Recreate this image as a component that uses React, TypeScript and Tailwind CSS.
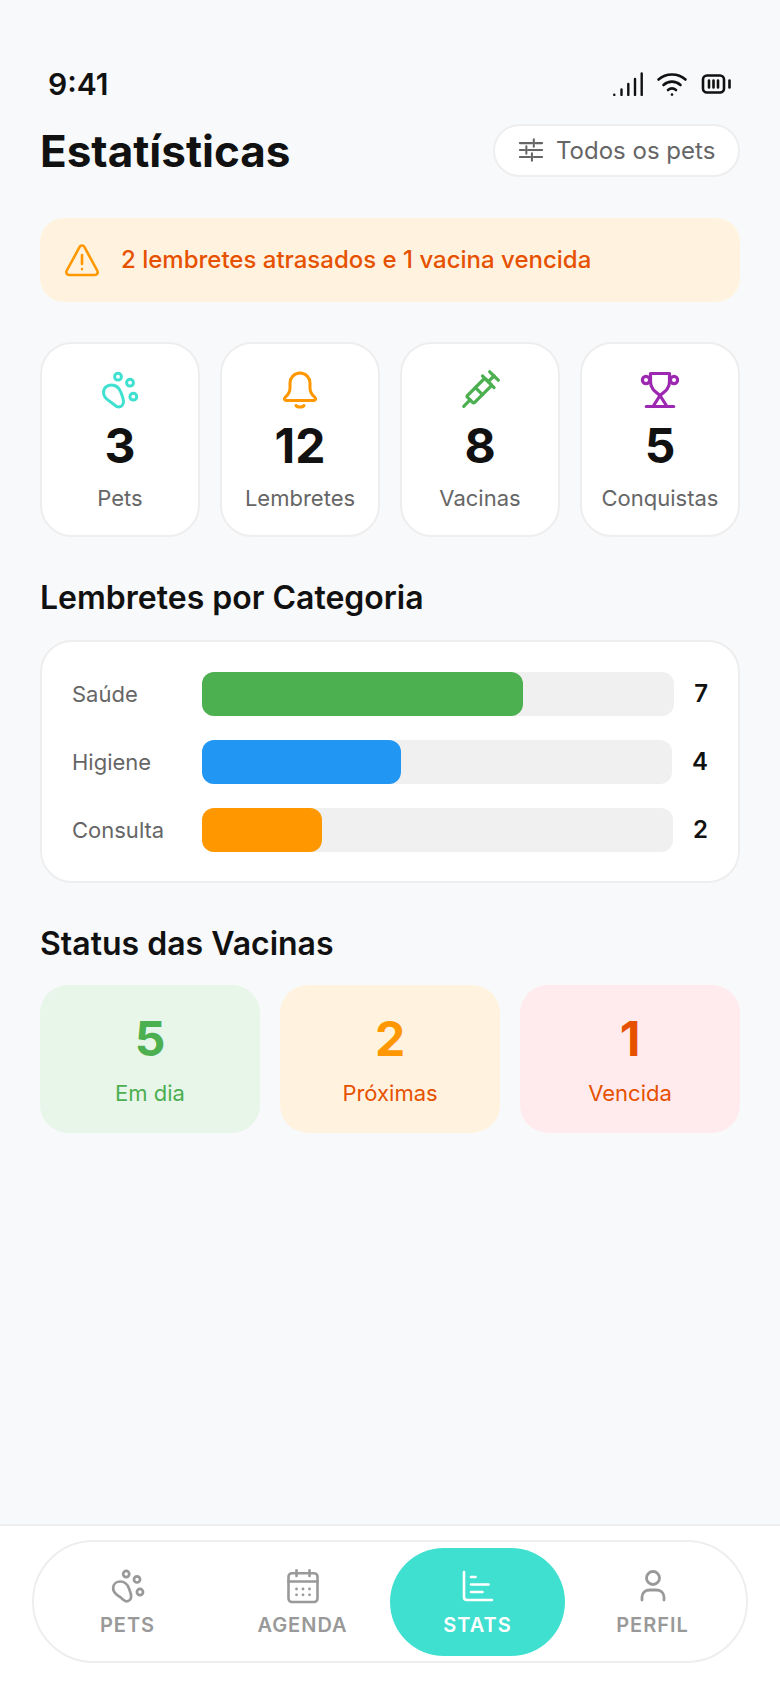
import type { ReactNode } from "react";

type IconProps = { className?: string };

function Paw({ className }: IconProps) {
	return (
		<svg viewBox="0 0 40 40" fill="none" stroke="currentColor" strokeWidth="3" strokeLinecap="round" strokeLinejoin="round" className={className}>
			<circle cx="18" cy="6.7" r="3.4" />
			<circle cx="30" cy="12.7" r="3.4" />
			<circle cx="33.3" cy="26.7" r="3.4" />
			<path d="M3.5 22.5C3.5 17.5 7.5 15 11.5 15C16 15 19.5 18.5 21 22.5C22 25.5 23.5 28.5 23.5 31.5C23.5 34.8 21.2 37 18.5 37C15.5 37 13.5 33.8 11 32.2C8 30.2 3.5 28 3.5 22.5Z" />
		</svg>
	);
}

function Bell({ className }: IconProps) {
	return (
		<svg viewBox="0 0 40 40" fill="none" stroke="currentColor" strokeWidth="3" strokeLinecap="round" strokeLinejoin="round" className={className}>
			<path d="M20 3C14 3 10 8 10 13V18C10 22 8 25 5 27.5C3.5 29 4.5 30.5 6.5 30.5H33.5C35.5 30.5 36.5 29 35 27.5C32 25 30 22 30 18V13C30 8 26 3 20 3Z" />
			<path d="M16 35.5C17 37.5 23 37.5 24 35.5" />
		</svg>
	);
}

function Syringe({ className }: IconProps) {
	return (
		<svg viewBox="0 0 40 40" fill="none" stroke="currentColor" strokeWidth="3.2" strokeLinecap="round" strokeLinejoin="round" className={className}>
			<g transform="rotate(-45 20 20)">
				<path d="M-3 20H6" />
				<rect x="6" y="15" width="25.7" height="10" rx="1.5" />
				<path d="M18.5 15V25" />
				<path d="M31.7 20H39.8" />
				<path d="M31.7 11.8V28.2" />
				<path d="M39.8 14V26" />
			</g>
		</svg>
	);
}

function Trophy({ className }: IconProps) {
	return (
		<svg viewBox="0 0 40 40" fill="none" stroke="currentColor" strokeWidth="3.2" strokeLinecap="round" strokeLinejoin="round" className={className}>
			<path d="M10.5 3.5H29.5V12C29.5 18 26 21 20 25.5C14 21 10.5 18 10.5 12V3.5Z" />
			<circle cx="6" cy="10" r="3.6" />
			<circle cx="34" cy="10" r="3.6" />
			<path d="M20 25.5L13 36.5" />
			<path d="M20 25.5L27 36.5" />
			<path d="M6.3 36.5H33.7" />
		</svg>
	);
}

function Calendar({ className }: IconProps) {
	return (
		<svg viewBox="0 0 36 36" fill="none" stroke="currentColor" strokeWidth="2.6" strokeLinecap="round" strokeLinejoin="round" className={className}>
			<rect x="3.5" y="5.2" width="29" height="28.8" rx="3.5" />
			<path d="M11.5 2.2V8M24.5 2.2V8" />
			<path d="M3.5 13.5H32.5" />
			<g fill="currentColor" stroke="none">
				<circle cx="11.5" cy="21" r="1.4" />
				<circle cx="18" cy="21" r="1.4" />
				<circle cx="24.5" cy="21" r="1.4" />
				<circle cx="11.5" cy="26.8" r="1.4" />
				<circle cx="18" cy="26.8" r="1.4" />
				<circle cx="24.5" cy="26.8" r="1.4" />
			</g>
		</svg>
	);
}

function Chart({ className }: IconProps) {
	return (
		<svg viewBox="0 0 36 36" fill="none" stroke="currentColor" strokeWidth="2.6" strokeLinecap="round" strokeLinejoin="round" className={className}>
			<path d="M4 4V29C4 31 5 32 7 32H32" />
			<path d="M11 9H15.5" />
			<path d="M11 16.5H28.5" />
			<path d="M11 24H22.5" />
		</svg>
	);
}

function Person({ className }: IconProps) {
	return (
		<svg viewBox="0 0 36 36" fill="none" stroke="currentColor" strokeWidth="2.8" strokeLinecap="round" strokeLinejoin="round" className={className}>
			<circle cx="18" cy="10" r="6.5" />
			<path d="M7 32V29C7 24.5 10.5 22 15 22H21C25.5 22 29 24.5 29 29V32" />
		</svg>
	);
}

function StatusIcons() {
	return (
		<div className="flex items-center gap-3 text-[#111111]">
			<svg viewBox="0 0 32 24" fill="none" stroke="currentColor" strokeWidth="2.4" strokeLinecap="round" className="h-6 w-8">
				<path d="M2.3 22.8V23M9.5 17.5V23M16.3 12V23M23 7V23M29.7 1.5V23" />
			</svg>
			<svg viewBox="0 0 32 24" fill="none" stroke="currentColor" strokeWidth="2.6" strokeLinecap="round" className="h-6 w-8">
				<path d="M2.5 7.5C10 0.8 22 0.8 29.5 7.5" />
				<path d="M7.5 13C12.5 8.5 19.5 8.5 24.5 13" />
				<path d="M12 18C14.5 16 17.5 16 20 18" />
				<path d="M16 22.5V22.6" />
			</svg>
			<svg viewBox="0 0 32 24" fill="none" stroke="currentColor" strokeWidth="2.6" strokeLinecap="round" className="h-6 w-8">
				<rect x="3" y="3.5" width="21" height="17" rx="4" />
				<path d="M9 8.5V15.5M13.5 8.5V15.5M18 8.5V15.5" />
				<path d="M29.5 8.5V15.5" />
			</svg>
		</div>
	);
}

function StatCard({ icon, value, label }: { icon: ReactNode; value: string; label: string }) {
	return (
		<div className="flex h-[195px] flex-col items-center rounded-[32px] border-2 border-[#eeeeee] bg-white pt-[26px]">
			{icon}
			<div className="mt-[8px] text-[48px] leading-[56px] font-bold text-[#111111]">{value}</div>
			<div className="mt-[10px] text-[22px] leading-[28px] text-[#666666]">{label}</div>
		</div>
	);
}

function BarRow({ label, value, fill, color }: { label: string; value: string; fill: string; color: string }) {
	return (
		<div className="flex items-center gap-5">
			<div className="w-[110px] shrink-0 text-[22px] leading-[28px] text-[#666666]">{label}</div>
			<div className="h-[44px] flex-1 rounded-[12px] bg-[#f0f0f0]">
				<div className={`h-full rounded-[12px] ${color}`} style={{ width: fill }} />
			</div>
			<div className="text-[24px] leading-[30px] font-semibold text-[#111111]">{value}</div>
		</div>
	);
}

function VaccineCard({ value, label, bg, numColor, labelColor }: { value: string; label: string; bg: string; numColor: string; labelColor: string }) {
	return (
		<div className={`flex h-[148px] flex-col items-center rounded-[28px] pt-[26px] ${bg}`}>
			<div className={`text-[48px] leading-[56px] font-bold ${numColor}`}>{value}</div>
			<div className={`mt-[12px] text-[22px] leading-[28px] font-normal ${labelColor}`}>{label}</div>
		</div>
	);
}

function NavItem({ icon, label, active }: { icon: ReactNode; label: string; active?: boolean }) {
	return (
		<div className={`flex h-[108px] w-[175px] flex-col items-center rounded-[54px] pt-[20px] ${active ? "bg-[#40e0d0] text-white" : "text-[#999999]"}`}>
			{icon}
			<div className="mt-[8px] text-[20px] leading-[26px] font-semibold tracking-[1px]">{label}</div>
		</div>
	);
}

export default function App() {
	return (
		<div className="flex h-[1688px] w-[780px] flex-col overflow-hidden bg-[#f8f9fa] font-['Inter',sans-serif]">
			<div className="mt-[60px] flex h-[48px] items-center justify-between pr-[48px] pl-[48px]">
				<div className="text-[30px] leading-[36px] font-semibold text-[#111111]">9:41</div>
				<StatusIcons />
			</div>

			<main className="flex-1 px-10">
				<div className="mt-[16px] flex h-[53px] items-center justify-between">
					<h1 className="text-[44px] leading-[52px] font-bold text-[#111111]">Estatísticas</h1>
					<div className="flex h-[53px] w-[247px] items-center gap-[12px] rounded-full border-2 border-[#eeeeee] bg-white pl-[23px] text-[24px] text-[#666666]">
						<svg viewBox="0 0 28 28" fill="none" stroke="currentColor" strokeWidth="2.2" strokeLinecap="round" className="h-[26px] w-[26px] shrink-0">
							<path d="M2 5.5H15M19 5.5H26M17 1.5V9.5" />
							<path d="M2 13H7M11 13H26M9 9V17" />
							<path d="M2 20.5H13M17 20.5H26M15 16.5V24.5" />
						</svg>
						<span>Todos os pets</span>
					</div>
				</div>

				<div className="mt-[41px] flex h-[84px] items-center gap-[21px] rounded-[24px] bg-[#fff3e0] pl-[24px] text-[24px] font-medium text-[#e65100]">
					<svg viewBox="0 0 36 36" fill="none" stroke="#ff9800" strokeWidth="2.6" strokeLinecap="round" strokeLinejoin="round" className="h-9 w-9 shrink-0">
						<path d="M18 3.5C16.8 3.5 16 4.2 15.5 5.2L2.8 28.5C1.6 30.8 2.8 33 5.3 33H30.7C33.2 33 34.4 30.8 33.2 28.5L20.5 5.2C20 4.2 19.2 3.5 18 3.5Z" />
						<path d="M18 13V22" />
						<path d="M18 27V27.1" />
					</svg>
					<span>2 lembretes atrasados e 1 vacina vencida</span>
				</div>

				<div className="mt-[40px] grid grid-cols-4 gap-5">
					<StatCard icon={<Paw className="h-10 w-10 text-[#40e0d0]" />} value="3" label="Pets" />
					<StatCard icon={<Bell className="h-10 w-10 text-[#ff9800]" />} value="12" label="Lembretes" />
					<StatCard icon={<Syringe className="h-10 w-10 text-[#4caf50]" />} value="8" label="Vacinas" />
					<StatCard icon={<Trophy className="h-10 w-10 text-[#9c27b0]" />} value="5" label="Conquistas" />
				</div>

				<h2 className="mt-[43px] text-[32px] leading-[36px] font-semibold text-[#111111]">Lembretes por Categoria</h2>
				<div className="mt-[24px] flex h-[243px] flex-col justify-center gap-6 rounded-[32px] border-2 border-[#eeeeee] bg-white px-[30px]">
					<BarRow label="Saúde" value="7" fill="68%" color="bg-[#4caf50]" />
					<BarRow label="Higiene" value="4" fill="42.4%" color="bg-[#2196f3]" />
					<BarRow label="Consulta" value="2" fill="25.5%" color="bg-[#ff9800]" />
				</div>

				<h2 className="mt-[43px] text-[32px] leading-[36px] font-semibold text-[#111111]">Status das Vacinas</h2>
				<div className="mt-[23px] grid grid-cols-3 gap-5">
					<VaccineCard value="5" label="Em dia" bg="bg-[#e8f5e9]" numColor="text-[#4caf50]" labelColor="text-[#4caf50]" />
					<VaccineCard value="2" label="Próximas" bg="bg-[#fff3e0]" numColor="text-[#ff9800]" labelColor="text-[#e65100]" />
					<VaccineCard value="1" label="Vencida" bg="bg-[#ffebee]" numColor="text-[#e65100]" labelColor="text-[#e65100]" />
				</div>
			</main>

			<nav className="h-[164px] shrink-0 border-t-2 border-[#eeeeee] bg-white px-8 pt-[14px]">
				<div className="flex h-[123px] items-center rounded-full border-2 border-[#eeeeee] px-[6px]">
					<NavItem icon={<Paw className="h-9 w-9" />} label="PETS" />
					<NavItem icon={<Calendar className="h-9 w-9" />} label="AGENDA" />
					<NavItem icon={<Chart className="h-9 w-9" />} label="STATS" active />
					<NavItem icon={<Person className="h-9 w-9" />} label="PERFIL" />
				</div>
			</nav>
		</div>
	);
}
